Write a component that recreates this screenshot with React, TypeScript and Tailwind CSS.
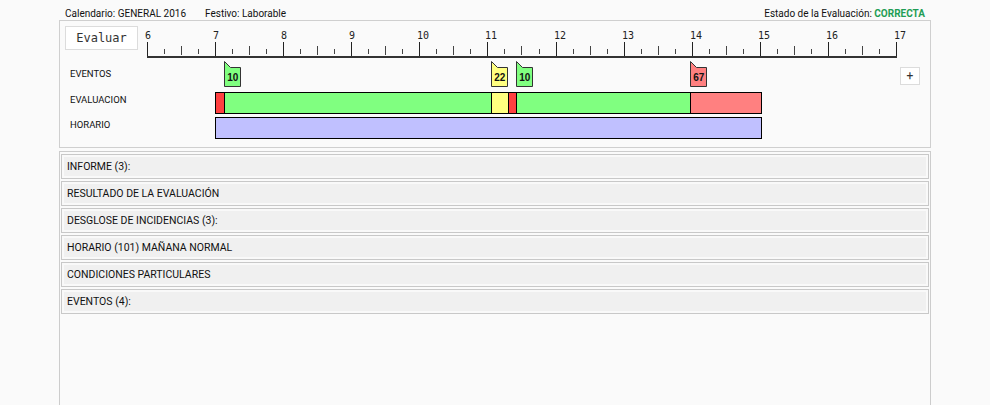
import React from "react";

const PX_PER_HOUR = 68.09;
const RULER_WIDTH = 749;

interface Segment {
  width: number;
  color: string;
}

interface Marker {
  left: number;
  value: string;
  color: string;
}

const evalSegments: Segment[] = [
  { width: 8, color: "bg-[#ff4040]" },
  { width: 267, color: "bg-[#80ff80]" },
  { width: 17, color: "bg-[#ffff80]" },
  { width: 8, color: "bg-[#ff4040]" },
  { width: 174, color: "bg-[#80ff80]" },
  { width: 71, color: "bg-[#ff8080]" },
];

const markers: Marker[] = [
  { left: 77, value: "10", color: "#80ff80" },
  { left: 344, value: "22", color: "#ffff80" },
  { left: 369, value: "10", color: "#80ff80" },
  { left: 543, value: "67", color: "#ff8080" },
];

const sections = [
  "INFORME (3):",
  "RESULTADO DE LA EVALUACIÓN",
  "DESGLOSE DE INCIDENCIAS (3):",
  "HORARIO (101) MAÑANA NORMAL",
  "CONDICIONES PARTICULARES",
  "EVENTOS (4):",
];

function Ruler() {
  const ticks = [];
  for (let i = 0; i <= 44; i++) {
    const x = Math.round((i * PX_PER_HOUR) / 4) + 0.5;
    const top = i % 4 === 0 ? 21 : i % 2 === 0 ? 25 : 28;
    const bottom = i % 4 === 0 ? 35 : i % 2 === 0 ? 34 : 33;
    ticks.push(
      <line key={i} x1={x} y1={top} x2={x} y2={bottom} stroke={i % 4 === 0 ? "#222" : "#444"} strokeWidth="1" />
    );
  }
  const hours = [6, 7, 8, 9, 10, 11, 12, 13, 14, 15, 16, 17];
  // drawn 2px in from the left so the "6" label is not cut
  return (
    <svg width="766" height="38" className="block">
      <g transform="translate(2 0)">
        {hours.map((h) => (
          <text
            key={h}
            x={Math.round((h - 6) * PX_PER_HOUR) - 2}
            y="17.5"
            fontSize="10"
            fill="#222"
            style={{ fontFamily: '"DejaVu Sans Mono", monospace' }}
          >
            {h}
          </text>
        ))}
        {ticks}
        <rect x="0" y="35" width={RULER_WIDTH + 1} height="2" fill="#333" />
      </g>
    </svg>
  );
}

function Flag({ m }: { m: Marker }) {
  return (
    <svg width="18" height="26" className="absolute top-[2px]" style={{ left: m.left }}>
      <polygon points="0.5,0.5 6.5,6.5 16.5,6.5 16.5,25.5 0.5,25.5" fill={m.color} stroke="#333" strokeWidth="1" />
      <text
        x="8.7"
        y="19.5"
        textAnchor="middle"
        fontSize="10"
        fontWeight="bold"
        fill="#111"
        style={{ fontFamily: '"Liberation Sans", Arial, sans-serif' }}
      >
        {m.value}
      </text>
    </svg>
  );
}

export default function App() {
  return (
    <div className="w-[990px] h-[405px] overflow-hidden bg-[#fafafa] text-[#111] font-['Roboto',sans-serif]">
      {/* Header */}
      <div className="flex h-[20px] pt-[8px] pl-[65px] pr-[65px] text-[10px] leading-[12px]">
        <span className="w-[140px] shrink-0">Calendario: GENERAL 2016</span>
        <span>Festivo: Laborable</span>
        <span className="ml-auto">
          Estado de la Evaluación: <span className="font-bold text-[#1f9d55]">CORRECTA</span>
        </span>
      </div>

      {/* Timeline panel */}
      <div className="ml-[59px] w-[872px] h-[128px] border border-[#cfcfcf] flex flex-col">
        <div className="flex h-[38px] shrink-0">
          <button className="ml-[5px] mt-[5px] w-[73px] h-[24px] border border-[#dcdcdc] bg-white text-[12px] leading-none text-[#333] font-['DejaVu_Sans_Mono',monospace] flex items-center justify-center">
            Evaluar
          </button>
          <div className="ml-[7px]">
            <Ruler />
          </div>
        </div>

        <div className="flex h-[30px] shrink-0">
          <div className="w-[87px] shrink-0 pl-[10px] pt-[9px] text-[9.5px] leading-[12px]">EVENTOS</div>
          <div className="relative w-[749px] h-full shrink-0">
            {markers.map((m, i) => (
              <Flag key={i} m={m} />
            ))}
          </div>
          <div className="ml-[4px] mt-[8px] w-[20px] h-[18px] border border-[#dcdcdc] bg-white flex items-center justify-center text-[12px] leading-none text-[#333]">
            +
          </div>
        </div>

        <div className="flex h-[25px] shrink-0">
          <div className="w-[87px] shrink-0 pl-[10px] pt-[5px] text-[9.5px] leading-[12px]">EVALUACION</div>
          <div className="ml-[68px] mt-[3px] w-[547px] h-[22px] border border-black flex">
            {evalSegments.map((s, i) => (
              <div
                key={i}
                className={`${s.color} h-full shrink-0 ${i > 0 ? "border-l border-black" : ""}`}
                style={{ width: s.width }}
              />
            ))}
          </div>
        </div>

        <div className="flex h-[25px] shrink-0">
          <div className="w-[87px] shrink-0 pl-[10px] pt-[5px] text-[9.5px] leading-[12px]">HORARIO</div>
          <div className="ml-[68px] mt-[3px] w-[547px] h-[22px] border border-black bg-[#c0c0ff]" />
        </div>
      </div>

      {/* Sections */}
      <div className="mt-[3px] ml-[59px] w-[872px] h-[300px] border-t border-l border-r border-[#cccccc] pt-[2px] px-[1px] flex flex-col gap-[2px]">
        {sections.map((s) => (
          <div key={s} className="h-[25px] shrink-0 border border-[#c8c8c8] bg-[#f9f9f9] p-[2px]">
            <div className="h-full bg-[#f0f0f0] flex items-center pl-[3px] text-[10.5px] text-[#111]">{s}</div>
          </div>
        ))}
      </div>
    </div>
  );
}
